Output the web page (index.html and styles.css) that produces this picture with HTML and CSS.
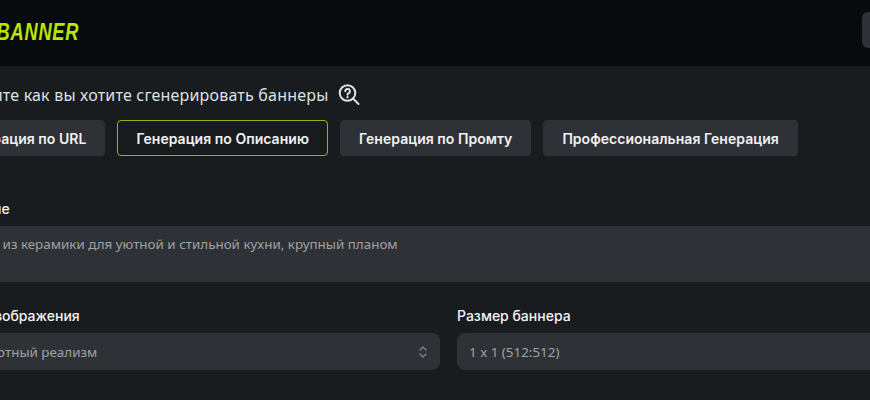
FILE: index.html
```html
<!DOCTYPE html>
<html lang="en">
  <head>
    <meta charset="UTF-8" />
    <meta name="viewport" content="width=device-width, initial-scale=1.0" />
    <title>AI Banner</title>
    <link rel="stylesheet" href="styles.css">
  </head>
  <body>
    <header class="header">
      <div class="logo">AI BANNER</div>
      <button class="header-button" aria-label="Меню"></button>
    </header>
    <main class="content">
      <h2 class="intro">
        Выберите как вы хотите сгенерировать баннеры
        <svg class="help-icon" width="22" height="22" viewBox="0 0 22 22" fill="none" stroke="currentColor" stroke-width="2" stroke-linecap="round">
          <circle cx="9.5" cy="9" r="7.8"/>
          <path d="M15 14.5l5.5 5.5"/>
          <path d="M7.3 7.2a2.3 2.3 0 1 1 3.5 2c-.9.5-1.3.9-1.3 1.5" stroke-width="2"/>
          <path d="M9.5 13.2v.1" stroke-width="2.2"/>
        </svg>
      </h2>
      <div class="tabs">
        <button class="tab">Генерация по URL</button>
        <button class="tab active">Генерация по Описанию</button>
        <button class="tab">Генерация по Промту</button>
        <button class="tab">Профессиональная Генерация</button>
      </div>
      <label class="label description-label">Описание</label>
      <div class="textarea">Посуда из керамики для уютной и стильной кухни, крупный планом</div>
      <div class="fields">
        <div>
          <label class="label">Стиль изображения</label>
          <div class="select">
            Беззаботный реализм
            <svg class="select-arrows" width="10" height="16" viewBox="0 0 10 16" fill="none" stroke="currentColor" stroke-width="1.2" stroke-linecap="round" stroke-linejoin="round">
              <path d="M2 6l3-3 3 3"/>
              <path d="M2 10l3 3 3-3"/>
            </svg>
          </div>
        </div>
        <div>
          <label class="label">Размер баннера</label>
          <div class="select">1 x 1 (512:512)</div>
        </div>
      </div>
    </main>
  </body>
</html>
```

FILE: styles.css
```css
html,
body {
  height: 100%;
}
body {
  margin: 0 0 0 -59px;
  width: 1026px;
  background-color: #191c1f;
  color: #fff;
  font-family: Inter, "Noto Sans", sans-serif;
  overflow: hidden;
}
.header {
  display: flex;
  justify-content: space-between;
  align-items: flex-start;
  height: 66px;
  padding: 12px 17px 0 30px;
  background-color: #080b0d;
  box-sizing: border-box;
}
.logo {
  height: 36px;
  font-family: "Liberation Sans", sans-serif;
  font-size: 24px;
  font-weight: 700;
  font-style: italic;
  line-height: 39px;
  letter-spacing: 1px;
  color: #b8e600;
  transform: scaleX(0.76);
  transform-origin: left center;
}
.header-button {
  width: 88px;
  height: 36px;
  border: 0;
  border-radius: 6px;
  background-color: #2e3135;
}
.content {
  padding-top: 16px;
}
.intro {
  display: flex;
  align-items: center;
  gap: 10px;
  height: 26px;
  margin: 0 0 12px;
  font-family: "Noto Sans", sans-serif;
  font-size: 16px;
  font-weight: 400;
  letter-spacing: 0.2px;
  color: #dfe0e1;
}
.tabs {
  display: flex;
  gap: 12px;
}
.tab {
  height: 36px;
  padding: 0 18px;
  border: 1px solid transparent;
  border-radius: 4px;
  background-color: #2e3135;
  color: #f2f2f2;
  font-family: inherit;
  font-size: 14px;
  font-weight: 600;
  letter-spacing: 0.03px;
  white-space: nowrap;
}
.tab.active {
  background-color: transparent;
  border-color: #96b316;
}
.label {
  display: block;
  margin-bottom: 8px;
  font-size: 14px;
  font-weight: 500;
  line-height: 18px;
  color: #f4f4f4;
}
.description-label {
  margin-top: 44px;
}
.textarea {
  height: 56px;
  padding: 9px 12px;
  box-sizing: border-box;
  background-color: #2e3135;
  font-family: "Noto Sans", sans-serif;
  font-size: 13.4px;
  line-height: 18px;
  color: #a0a2a4;
}
.fields {
  display: grid;
  grid-template-columns: 499px 1fr;
  gap: 17px;
  margin-top: 25px;
}
.select {
  display: flex;
  justify-content: space-between;
  align-items: center;
  height: 37px;
  padding: 0 12px;
  box-sizing: border-box;
  border-radius: 8px;
  background-color: #2e3135;
  font-family: "Noto Sans", sans-serif;
  font-size: 13.4px;
  color: #a0a2a4;
}
.select-arrows {
  color: #84878a;
}
```
